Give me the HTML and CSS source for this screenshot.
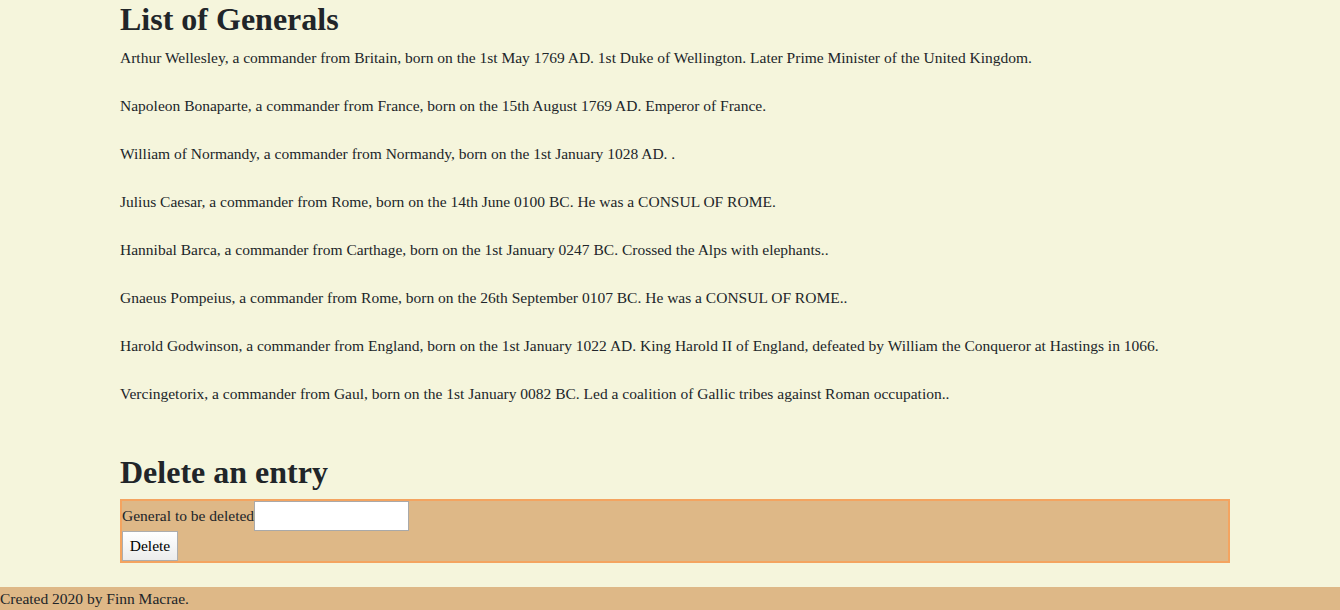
FILE: index.html
```html
<!DOCTYPE html>
<html>
<head>
<meta charset="utf-8">
<link rel="stylesheet" href="styles.css">
</head>
<body>
<main class="container">
  <h2 class="title">List of Generals</h2>
  <p>Arthur Wellesley, a commander from Britain, born on the 1st May 1769 AD. 1st Duke of Wellington. Later Prime Minister of the United Kingdom.</p>
  <p>Napoleon Bonaparte, a commander from France, born on the 15th August 1769 AD. Emperor of France.</p>
  <p>William of Normandy, a commander from Normandy, born on the 1st January 1028 AD. .</p>
  <p>Julius Caesar, a commander from Rome, born on the 14th June 0100 BC. He was a CONSUL OF ROME.</p>
  <p>Hannibal Barca, a commander from Carthage, born on the 1st January 0247 BC. Crossed the Alps with elephants..</p>
  <p>Gnaeus Pompeius, a commander from Rome, born on the 26th September 0107 BC. He was a CONSUL OF ROME..</p>
  <p>Harold Godwinson, a commander from England, born on the 1st January 1022 AD. King Harold II of England, defeated by William the Conqueror at Hastings in 1066.</p>
  <p>Vercingetorix, a commander from Gaul, born on the 1st January 0082 BC. Led a coalition of Gallic tribes against Roman occupation..</p>
  <h2 class="title delete-title">Delete an entry</h2>
  <form class="delete-form">
    <div class="row"><label for="g">General to be deleted</label><input id="g" type="text" class="field"></div>
    <div class="row"><button type="button" class="btn">Delete</button></div>
  </form>
</main>
<footer class="footer">Created 2020 by Finn Macrae.</footer>
</body>
</html>
```
FILE: styles.css
```css
html, body {
  margin: 0;
  padding: 0;
}
body {
  background: #f5f5dc;
  color: #212529;
  font-family: "Liberation Serif", "Times New Roman", serif;
  font-size: 15.5px;
}
.container {
  width: 1110px;
  margin-left: 120px;
}
.title {
  font-size: 32px;
  line-height: 38px;
  font-weight: bold;
  margin: 0 0 8px;
}
.delete-title {
  margin-top: 47px;
}
p {
  margin: 0 0 24px;
  line-height: 24px;
}
.delete-form {
  background: #deb887;
  border: 2px solid #f4a460;
  height: 60px;
}
.row {
  display: flex;
  align-items: center;
  height: 30px;
}
.field {
  box-sizing: border-box;
  width: 155px;
  height: 30px;
  border: 1px solid #a9a9a9;
  background: #fff;
  margin: 0;
}
.btn {
  box-sizing: border-box;
  width: 56px;
  height: 30px;
  font-family: inherit;
  font-size: 15.5px;
  color: #000;
  background: linear-gradient(#fff, #ececec);
  border: 1px solid #adadad;
  margin: 0;
  padding: 0;
}
.footer {
  margin-top: 24px;
  background: #deb887;
  height: 24px;
  line-height: 24px;
}
```
